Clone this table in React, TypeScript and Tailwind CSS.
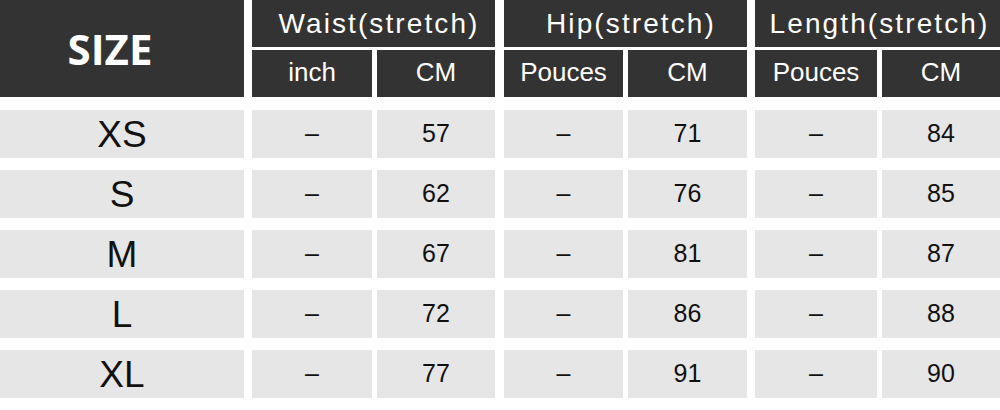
import React from 'react';

const cols = [
  { w: 'w-[120px]', ml: 'ml-[8px]' },
  { w: 'w-[118px]', ml: 'ml-[5px]' },
  { w: 'w-[119px]', ml: 'ml-[9px]' },
  { w: 'w-[119px]', ml: 'ml-[5px]' },
  { w: 'w-[122px]', ml: 'ml-[8px]' },
  { w: 'w-[118px]', ml: 'ml-[5px]' },
];

const groups = [
  { label: 'Waist(stretch)', units: ['inch', 'CM'], w: 'w-[243px]', ml: 'ml-[8px]', pl: 'pl-[11px]' },
  { label: 'Hip(stretch)', units: ['Pouces', 'CM'], w: 'w-[243px]', ml: 'ml-[9px]', pl: 'pl-[11px]' },
  { label: 'Length(stretch)', units: ['Pouces', 'CM'], w: 'w-[245px]', ml: 'ml-[8px]', pl: 'pl-[4px]' },
];

const rows = [
  { size: 'XS', values: ['–', '57', '–', '71', '–', '84'] },
  { size: 'S', values: ['–', '62', '–', '76', '–', '85'] },
  { size: 'M', values: ['–', '67', '–', '81', '–', '87'] },
  { size: 'L', values: ['–', '72', '–', '86', '–', '88'] },
  { size: 'XL', values: ['–', '77', '–', '91', '–', '90'] },
];

const arial = "font-['Liberation_Sans',Arial,sans-serif]";

export default function App() {
  return (
    <div className={`w-[1000px] h-[410px] bg-white ${arial} overflow-hidden`}>
      {/* header */}
      <div className="flex h-[97px]">
        <div className="w-[244px] h-full bg-[#333333] flex items-center justify-center pr-[24px]">
          <span className="font-['Open_Sans',sans-serif] font-bold text-[42px] text-white leading-none">SIZE</span>
        </div>
        {groups.map((g, gi) => (
          <div key={g.label} className={`${g.w} ${g.ml} flex flex-col`}>
            <div className={`h-[47px] bg-[#333333] flex items-center justify-center ${g.pl} text-white text-[28px] tracking-[2.1px] leading-none`}>
              {g.label}
            </div>
            <div className="flex mt-[3px] h-[47px]">
              {g.units.map((u, ui) => {
                const c = cols[gi * 2 + ui];
                return (
                  <div
                    key={u + ui}
                    className={`${c.w} ${ui === 1 ? 'ml-[5px]' : ''} h-full bg-[#333333] flex items-center justify-center pb-[4px] text-white text-[26px] leading-none`}
                  >
                    {u}
                  </div>
                );
              })}
            </div>
          </div>
        ))}
      </div>

      {/* body */}
      <div className="flex flex-col gap-[12px] pt-[13px]">
        {rows.map(r => (
          <div key={r.size} className="flex h-[48px]">
            <div className="w-[244px] bg-[#e6e6e6] flex items-center justify-center text-[37px] text-[#111] leading-none">
              {r.size}
            </div>
            {r.values.map((v, i) => (
              <div
                key={i}
                className={`${cols[i].w} ${cols[i].ml} bg-[#e6e6e6] flex items-center justify-center pb-[2px] text-[25px] text-[#111] leading-none`}
              >
                {v}
              </div>
            ))}
          </div>
        ))}
      </div>
    </div>
  );
}
